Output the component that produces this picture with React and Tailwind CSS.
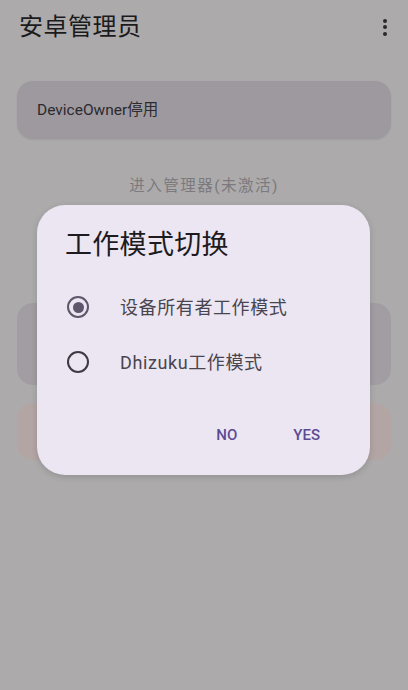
import React from "react";

const font = { fontFamily: 'Roboto, "Noto Sans CJK SC", sans-serif' };

function Radio({ checked }) {
  return (
    <div
      className={`w-[22px] h-[22px] rounded-full border-2 flex items-center justify-center ${
        checked ? "border-[#5e566b]" : "border-[#3d3a42]"
      }`}
    >
      {checked && <div className="w-[11px] h-[11px] rounded-full bg-[#5e566b]" />}
    </div>
  );
}

export default function App() {
  return (
    <div
      className="relative w-[408px] h-[690px] overflow-hidden bg-[#acaaab]"
      style={font}
    >
      {/* Top bar */}
      <div className="flex items-center justify-between h-[54px] pl-[19px] pr-[21px]">
        <div className="text-[24px] leading-none text-[#1b1a1c] tracking-[0.5px]">安卓管理员</div>
        <div className="flex flex-col items-center gap-[2.5px]">
          <div className="w-[4px] h-[4px] rounded-full bg-[#2a292b]" />
          <div className="w-[4px] h-[4px] rounded-full bg-[#2a292b]" />
          <div className="w-[4px] h-[4px] rounded-full bg-[#2a292b]" />
        </div>
      </div>

      {/* Content */}
      <div className="flex flex-col px-[17px] pt-[27px]">
        <div className="h-[58px] rounded-[16px] bg-[#9d999f] flex items-center pl-[20px] shadow-[0_1px_2px_rgba(0,0,0,0.08)]">
          <span className="text-[15.5px] text-[#2c2a2e] mt-[1px]">DeviceOwner停用</span>
        </div>
        <div className="mt-[36px] text-center text-[15.5px] text-[#7c7a7e] tracking-[1.5px]">
          进入管理器(未激活)
        </div>
        <div className="mt-[105px] h-[82px] rounded-[16px] bg-[#a19da3]" />
        <div className="mt-[18px] h-[57px] rounded-[16px] bg-[#b3a5a3]" />
      </div>

      {/* Dialog */}
      <div className="absolute left-[37px] top-[205px] w-[333px] h-[270px] rounded-[28px] bg-[#ece6f3] shadow-[0_2px_6px_rgba(0,0,0,0.15)] flex flex-col">
        <div className="pl-[28px] pt-[24px] text-[27px] leading-[32px] text-[#1d1b20] tracking-[0.3px]">
          工作模式切换
        </div>
        <div className="flex flex-col mt-[30px]">
          <div className="flex items-center h-[32px] pl-[30px]">
            <Radio checked />
            <span className="ml-[31px] text-[18px] text-[#48454e] tracking-[0.6px]">设备所有者工作模式</span>
          </div>
          <div className="flex items-center h-[32px] pl-[30px] mt-[23px]">
            <Radio />
            <span className="ml-[31px] text-[18px] text-[#48454e] tracking-[0.6px]">Dhizuku工作模式</span>
          </div>
        </div>
        <div className="flex justify-end items-center mt-[46px] pr-[50px] gap-[56px]">
          <span className="text-[15px] font-medium text-[#5c4b93]">NO</span>
          <span className="text-[15px] font-medium text-[#5c4b93]">YES</span>
        </div>
      </div>
    </div>
  );
}
